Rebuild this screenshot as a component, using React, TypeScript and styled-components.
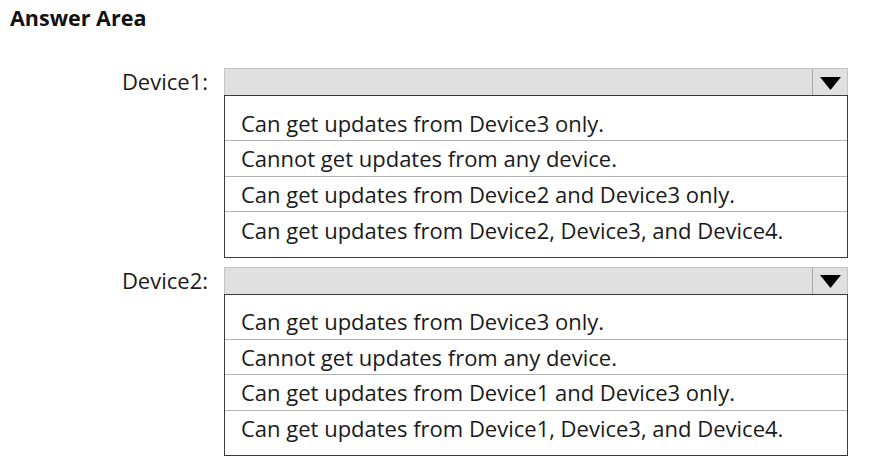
import React from "react";
import styled, { createGlobalStyle } from "styled-components";

const Global = createGlobalStyle`
  html, body { margin: 0; padding: 0; background: #ffffff; }
  body { font-family: "Open Sans", "Noto Sans", sans-serif; color: #1a1a1a; }
`;

const Page = styled.div`
  width: 873px;
  height: 460px;
  box-sizing: border-box;
  padding: 4px 0 0 10px;
`;

const Title = styled.h1`
  margin: 0;
  font-size: 21.5px;
  font-weight: 700;
  line-height: 28px;
  color: #111;
`;

const Grid = styled.div`
  display: grid;
  grid-template-columns: 198px 624px;
  column-gap: 16px;
  row-gap: 9px;
  margin-top: 36px;
`;

const Label = styled.div`
  text-align: right;
  font-size: 22px;
  line-height: 27px;
  height: 27px;
  color: #1a1a1a;
`;

const Control = styled.div`
  display: flex;
  flex-direction: column;
`;

const Select = styled.div`
  height: 27px;
  box-sizing: border-box;
  background: #e0e0e0;
  border: 1px solid #c4c4c4;
  border-bottom: none;
  display: flex;
  justify-content: flex-end;
`;

const ArrowButton = styled.div`
  width: 35px;
  box-sizing: border-box;
  border-left: 1px solid #a8a8a8;
  display: flex;
  align-items: center;
  justify-content: center;
  padding-top: 2px;
`;

const List = styled.div`
  border: 1.5px solid #3a3a3a;
  padding: 9.5px 0 9px;
  background: #fff;
`;

const Option = styled.div<{ $last?: boolean }>`
  height: 35.5px;
  box-sizing: border-box;
  display: flex;
  align-items: center;
  padding-left: 16px;
  font-size: 22px;
  color: #1a1a1a;
  border-bottom: ${(p) => (p.$last ? "none" : "1px solid #b4b4b4")};
`;

const groups = [
  {
    label: "Device1:",
    options: [
      "Can get updates from Device3 only.",
      "Cannot get updates from any device.",
      "Can get updates from Device2 and Device3 only.",
      "Can get updates from Device2, Device3, and Device4.",
    ],
  },
  {
    label: "Device2:",
    options: [
      "Can get updates from Device3 only.",
      "Cannot get updates from any device.",
      "Can get updates from Device1 and Device3 only.",
      "Can get updates from Device1, Device3, and Device4.",
    ],
  },
];

export default function App() {
  return (
    <Page>
      <Global />
      <Title>Answer Area</Title>
      <Grid>
        {groups.map((g) => (
          <React.Fragment key={g.label}>
            <Label>{g.label}</Label>
            <Control>
              <Select>
                <ArrowButton>
                  <svg width="21" height="13" viewBox="0 0 21 13">
                    <polygon points="0,0 21,0 10.5,13" fill="#000" />
                  </svg>
                </ArrowButton>
              </Select>
              <List>
                {g.options.map((o, i) => (
                  <Option key={o} $last={i === g.options.length - 1}>
                    {o}
                  </Option>
                ))}
              </List>
            </Control>
          </React.Fragment>
        ))}
      </Grid>
    </Page>
  );
}
